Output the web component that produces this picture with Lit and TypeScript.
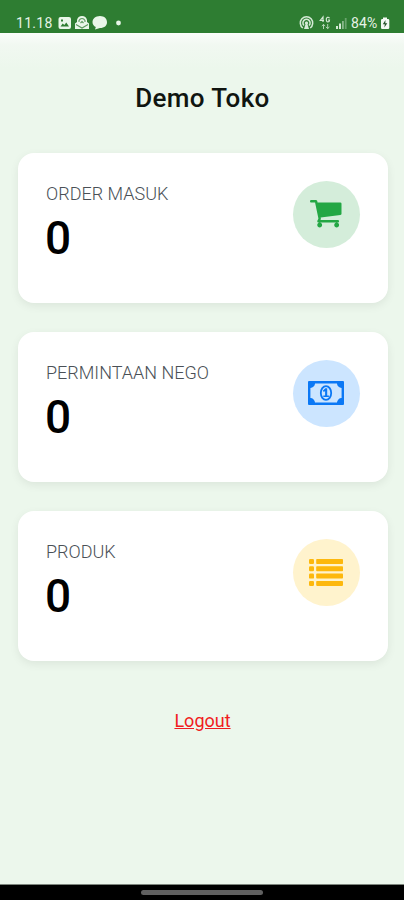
import { LitElement, html, css, svg } from "lit";
import { customElement, property } from "lit/decorators.js";

const cart = svg`<svg width="31.5" height="27.5" viewBox="0 256 1664 1408" preserveAspectRatio="none" fill="#23a744"><path d="M640 1536q0 52-38 90t-90 38-90-38-38-90 38-90 90-38 90 38 38 90zm896 0q0 52-38 90t-90 38-90-38-38-90 38-90 90-38 90 38 38 90zm128-1088v512q0 24-16.5 42.5t-40.5 21.5l-1044 122q13 60 13 70 0 16-24 64h920q26 0 45 19t19 45-19 45-45 19h-1024q-26 0-45-19t-19-45q0-11 8-31.5t16-36 21.500-40 15.500-29.500l-177-823h-204q-26 0-45-19t-19-45 19-45 45-19h256q16 0 28.500 6.500t19.500 15.500 13 24.500 8 26 5.500 29.500 4.500 26h1201q26 0 45 19t19 45z"/></svg>`;

const money = svg`<svg width="36" height="24" viewBox="0 0 36 24"><path fill="#0b78f5" fill-rule="evenodd" d="M1 0H35Q36 0 36 1V23Q36 24 35 24H1Q0 24 0 23V1Q0 0 1 0ZM7 2.4A4.7 4.7 0 0 1 2.4 7V17A4.7 4.7 0 0 1 7 21.600H29A4.700 4.700 0 0 1 33.600 17V7A4.700 4.700 0 0 1 29 2.400Z"/><ellipse cx="18" cy="12" rx="5.200" ry="6.900" fill="none" stroke="#0b78f5" stroke-width="1.800"/><path fill="#0b78f5" d="M17.300 7.300H19.200V14.500H20.900V16.100H15.300V14.500H17.100V10.100L15.900 11.100L14.800 9.800Z"/></svg>`;

const list = svg`<svg width="34" height="27" viewBox="0 0 34 27" fill="#fdb80d">${[0, 7.3, 14.6, 21.9].map(
  (y) => svg`<rect x="0" y=${y} width="5" height="5" rx="1.2"/><rect x="7.2" y=${y} width="26.8" height="5" rx=".8"/>`
)}</svg>`;

@customElement("stat-card")
class StatCard extends LitElement {
  @property() label = "";
  @property() value = "0";
  @property() tone = "green";
  @property({ attribute: false }) icon: unknown;

  static styles = css`
    :host {
      display: flex;
      justify-content: space-between;
      box-sizing: border-box;
      height: 150px;
      padding: 28px 28px 0;
      border-radius: 16px;
      background: #fff;
      box-shadow: 0 3px 10px rgba(0, 0, 0, 0.07);
    }
    .label {
      margin-top: 2px;
      font-size: 18px;
      line-height: 22px;
      font-weight: 300;
      color: #4a5056;
    }
    .value {
      font-size: 46px;
      line-height: 53px;
      font-weight: 500;
      margin-top: 7px;
      margin-left: -1px;
      color: #000;
    }
    .badge {
      width: 67px;
      height: 67px;
      border-radius: 50%;
      display: flex;
      align-items: center;
      justify-content: center;
    }
    .badge svg { display: block; margin: 0 1px 1px 0; }
    .green { background: #d4edda; }
    .blue { background: #cce5ff; }
    .yellow { background: #fff3cd; }
  `;

  render() {
    return html`
      <div>
        <div class="label">${this.label}</div>
        <div class="value">${this.value}</div>
      </div>
      <div class="badge ${this.tone}">${this.icon}</div>
    `;
  }
}

@customElement("status-bar")
class StatusBar extends LitElement {
  static styles = css`
    :host {
      display: flex;
      box-sizing: border-box;
      height: 33px;
      padding: 13px 14px 0 16px;
      justify-content: space-between;
      background: #2e7d32;
      color: #e6f3e6;
      font-size: 14px;
      line-height: 20px;
    }
    .group { display: flex; height: 20px; align-items: center; }
    .time { letter-spacing: 0.3px; width: 42px; }
    .battery { letter-spacing: 0.1px; width: 29px; }
    svg { display: block; }
  `;

  render() {
    return html`
      <div class="group">
        <span class="time">11.18</span>
        <svg width="65" height="16" viewBox="0 0 65 16" fill="#e9f6e9">
          <path fill-rule="evenodd" d="M2.5 2H11Q13 2 13 4V12Q13 14 11 14H2.500Q.5 14 .5 12V4Q.5 2 2.500 2ZM2.500 11.500H11L8.300 7.500L6.300 10L4.700 8.500ZM3 4.500V6.500H5V4.500Z"/>
          <path d="M17 14V8.500L19 7V5Q20 1 24 1T29 5V7L31 8.500V14Z"/>
          <path d="M18 9.500L24 13L30 9.500M21 7V5.500Q22 3.500 24 3.500T27 5.500V7M22.500 8L24 6.500L25.500 8" fill="none" stroke="#5b985e" stroke-width="1.100"/>
          <path d="M42 1C46.500 1 49 3.800 49 7.200S46.500 13 42 13L37 14.500L37.800 12C35.800 11 34.500 9.300 34.500 7.200C34.500 3.800 37.500 1 42 1Z"/>
          <circle cx="60.500" cy="8" r="2.400"/>
        </svg>
      </div>
      <div class="group">
        <svg width="52" height="16" viewBox="0 0 52 16" fill="none" stroke="#d5ead6">
          <path stroke-width="1.500" d="M3.800 13A6.200 6.200 0 1 1 11.200 13M5 10.500A3.600 3.600 0 1 1 10 10.500"/>
          <path stroke="none" fill="#d5ead6" d="M7.500 6.500A1.500 1.500 0 0 1 8.500 9.200L10 14H5L6.500 9.200A1.500 1.500 0 0 1 7.500 6.500Z"/>
          <path stroke-width="1.200" d="M24 7V2L21.300 5.500H25M30.500 3.200Q29.800 2 28.500 2.300Q27 3 27.300 5T28.800 7Q30.500 7 30.500 5H29"/>
          <path stroke-width="1" opacity=".8" d="M24.500 14V9.500M22.800 11L24.500 9.500L26.200 11M28.700 9V13.500M27 12L28.700 13.500L30.400 12"/>
          <g stroke="none" fill="#d5ead6"><rect x="37" y="11" width="2" height="3"/><rect x="40" y="8.500" width="2" height="5.500"/><rect x="43" y="6" width="1.800" height="8" opacity=".55"/><rect x="45.800" y="3" width="1.800" height="11" opacity=".35"/></g>
        </svg>
        <span class="battery">84%</span>
        <svg width="10" height="16" viewBox="0 0 10 16" fill="#f4faf4">
          <path d="M3 2.500H7V4H8Q9.300 4 9.300 5.300V12.700Q9.300 14 8 14H2.300Q1 14 1 12.700V5.300Q1 4 2.300 4H3Z"/>
          <path fill="#24522a" d="M5.500 5L2.800 9.300H4.800L4.300 12.500L7.300 8.200H5.300Z"/>
        </svg>
      </div>
    `;
  }
}

@customElement("app-root")
class AppRoot extends LitElement {
  static styles = css`
    :host {
      display: flex;
      flex-direction: column;
      height: 900px;
      overflow: hidden;
      background: #ecf7ec;
      font-family: Roboto, sans-serif;
    }
    .page {
      flex: 1;
      display: flex;
      flex-direction: column;
      background: linear-gradient(#fbfdfb 0, #f1f8f1 12px, #ecf7ec 36px);
    }
    h1 {
      margin: 49px 0 0;
      padding-left: 1px;
      font-size: 26px;
      line-height: 32px;
      font-weight: 500;
      letter-spacing: 0.35px;
      text-align: center;
      color: #101510;
    }
    .cards {
      display: grid;
      gap: 29px;
      margin: 39px 16px 0 18px;
    }
    .logout {
      align-self: center;
      margin-top: 49px;
      padding-left: 1px;
      font-size: 18px;
      line-height: 22px;
      color: #f01c20;
      text-decoration: underline;
    }
    .nav {
      height: 16px;
      display: flex;
      justify-content: center;
      align-items: center;
      background: #000;
      border-top: 1px solid #7d857d;
      box-sizing: border-box;
    }
    .handle {
      width: 122px;
      height: 5px;
      border-radius: 3px;
      background: #606060;
    }
  `;

  render() {
    return html`
      <status-bar></status-bar>
      <main class="page">
        <h1>Demo Toko</h1>
        <div class="cards">
          <stat-card label="ORDER MASUK" tone="green" .icon=${cart}></stat-card>
          <stat-card label="PERMINTAAN NEGO" tone="blue" .icon=${money}></stat-card>
          <stat-card label="PRODUK" tone="yellow" .icon=${list}></stat-card>
        </div>
        <a class="logout">Logout</a>
      </main>
      <div class="nav"><div class="handle"></div></div>
    `;
  }
}
